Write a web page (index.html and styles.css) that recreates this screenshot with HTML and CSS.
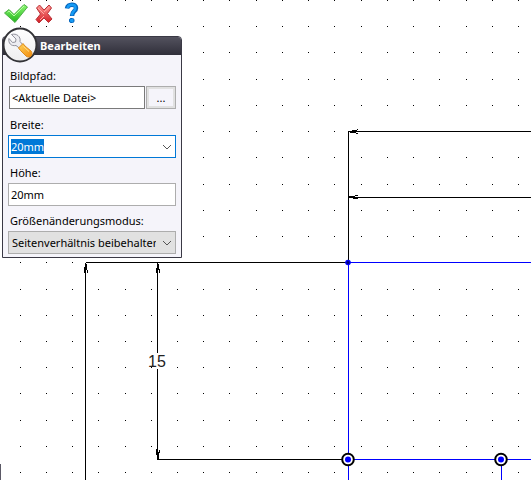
FILE: index.html
```html
<!DOCTYPE html>
<html lang="de">
<head>
<meta charset="utf-8">
<title>Bearbeiten</title>
<link rel="stylesheet" href="styles.css">
</head>
<body>
<main class="workspace">
  <svg class="drawing" aria-label="Skizze">
    <g id="grid" class="crisp"></g>
    <g class="crisp blue">
      <rect x="348" y="262" width="4000" height="1"/>
      <rect x="348" y="262" width="1" height="4000"/>
      <rect x="348" y="459" width="4000" height="1"/>
      <rect x="501" y="459" width="1" height="4000"/>
    </g>
    <g class="crisp">
      <rect x="348" y="131" width="4000" height="1"/>
      <rect x="348" y="197" width="4000" height="1"/>
      <rect x="348" y="131" width="1" height="131"/>
      <rect x="86" y="262" width="262" height="1"/>
      <rect x="85" y="263" width="1" height="4000"/>
      <rect x="157" y="262" width="1" height="91"/>
      <rect x="157" y="369" width="1" height="91"/>
      <rect x="157" y="459" width="191" height="1"/>
      <path d="M350 131h7v1h-1v1h-6zM352 130h5v1h-5zM357 129h1v1h-1zM356 133h2v1h-2z"/>
      <path d="M349 196h6v1h3v1h-9zM355 195h3v1h-3zM353 198h5v1h-5z"/>
      <path d="M85 264h2v6h-2zM84 267h2v6h-2zM87 270h1v3h-1z"/>
      <path d="M157 264h2v6h-2zM156 268h2v5h-2zM159 269h1v4h-1z"/>
      <path d="M157 452h2v8h-2zM156 449h2v6h-2zM159 450h1v3h-1z"/>
    </g>
    <rect class="edge crisp" x="0" y="464" width="1" height="4000"/>
    <circle class="blue" cx="348" cy="262.5" r="2.8"/>
    <circle class="core" cx="348" cy="262.5" r="1.5"/>
    <circle class="ring" cx="348" cy="459.5" r="5.8"/>
    <circle class="blue" cx="348" cy="459.5" r="3"/>
    <circle class="ring" cx="501" cy="459.5" r="5.8"/>
    <circle class="blue" cx="501" cy="459.5" r="3"/>
    <text class="dimension" x="157" y="367" text-anchor="middle">15</text>
  </svg>

  <nav class="toolbar">
    <button type="button" aria-label="Übernehmen">
      <svg width="24" height="24" viewBox="0 0 24 24">
        <defs><linearGradient id="g1" x2="0" y2="1"><stop stop-color="#8dfa72"/><stop offset="1" stop-color="#22b51c"/></linearGradient></defs>
        <path d="M0.500 13L5 9.500L10 14.500L20 4.500L23.500 7L11 22.500Z" fill="url(#g1)" stroke="#4fae48" stroke-linejoin="round"/>
        <path d="M3.500 12.300L5 11L10 16L20 6" fill="none" stroke="#b7ffa0"/>
      </svg>
    </button>
    <button type="button" aria-label="Abbrechen">
      <svg width="24" height="24" viewBox="0 0 24 24">
        <defs><linearGradient id="g2" x2="0" y2="1"><stop stop-color="#ff9590"/><stop offset="1" stop-color="#d31c24"/></linearGradient></defs>
        <path d="M4.500 8L7.500 5L12 10L17 5L19.500 8L15.500 13.500L20 19L16.500 22.500L12 18L7 23L4 19.500L8.500 14Z" fill="url(#g2)" stroke="#b83138" stroke-linejoin="round"/>
        <path d="M6 8L12 14M17.500 7L12 12M8 20L12 16" fill="none" stroke="#ffaaa6"/>
      </svg>
    </button>
    <button type="button" aria-label="Hilfe">
      <svg width="24" height="24" viewBox="0 0 24 24">
        <path d="M7 8.500C7.500 3.500 16 3.500 16 8C16 11.500 12 11 12 16" fill="none" stroke="#0565bd" stroke-width="4.500"/>
        <path d="M7.500 8C8.500 3.800 15.500 3.800 15.500 8C15.500 11 12 10.800 12 15.500" fill="none" stroke="#159bf5" stroke-width="2.500"/>
        <rect x="9.500" y="18.500" width="4.500" height="4" rx="1.500" fill="#159bf5" stroke="#0565bd"/>
      </svg>
    </button>
  </nav>

  <section class="panel">
    <svg class="badge" width="36" height="36" viewBox="0 0 36 36" aria-hidden="true">
      <defs>
        <linearGradient id="g3" x2="0" y2="1"><stop stop-color="#fff"/><stop offset="1" stop-color="#eeeeef"/></linearGradient>
        <linearGradient id="g4" x2="1" y2="1"><stop stop-color="#ffd257"/><stop offset="1" stop-color="#f28c0e"/></linearGradient>
      </defs>
      <circle cx="18" cy="18" r="16.500" fill="url(#g3)" stroke="#333337" stroke-width="2"/>
      <path d="M9.500 7.500L14 12L13.500 15L10.500 15.500L7 11.500C6 16 9 19.500 14 18.500L18.500 22L21.500 18.500L18 14.500C19 9.500 14.500 6 9.500 7.500Z" fill="#ededf1" stroke="#92929c" stroke-linejoin="round"/>
      <path d="M16.500 21L21 16.500L23 19L29 24C32 28 27.500 32 24 29L18.500 23.500Z" fill="url(#g4)" stroke="#dd8a1c" stroke-linejoin="round"/>
      <path d="M21.500 19.500L27 24.500" stroke="#ffe08a"/>
    </svg>
    <h1 class="title">Bearbeiten</h1>
    <form class="fields">
      <label for="path">Bildpfad:</label>
      <div class="path-row">
        <input id="path" class="path" type="text" value="&lt;Aktuelle Datei&gt;">
        <button class="browse" type="button" aria-label="Durchsuchen">...</button>
      </div>
      <label for="width">Breite:</label>
      <div class="combo">
        <input id="width" type="text" value="20mm">
        <svg class="chevron" width="10" height="6" viewBox="0 0 10 6"><path d="M1 1L5 5L9 1"/></svg>
      </div>
      <label for="height">Höhe:</label>
      <input id="height" class="plain" type="text" value="20mm">
      <label for="mode">Größenänderungsmodus:</label>
      <div class="choice">
        <select id="mode"><option>Seitenverhältnis beibehalten</option></select>
        <svg class="chevron" width="10" height="6" viewBox="0 0 10 6"><path d="M1 1L5 5L9 1"/></svg>
      </div>
    </form>
  </section>
</main>
<script src="script.js"></script>
</body>
</html>
```
FILE: styles.css
```css
* { box-sizing: border-box; }
body {
  margin: 0;
  background: #fff;
  color: #000;
  font: 11px/16px "Noto Sans", "Open Sans", sans-serif;
}
.workspace {
  position: relative;
  min-height: 100vh;
  overflow: hidden;
}
.drawing {
  position: absolute;
  inset: 0;
  width: 100%;
  height: 100%;
}
.crisp { shape-rendering: crispEdges; }
.blue { fill: #00f; }
.core { fill: #000078; }
.edge { fill: #5b5966; }
.ring { fill: #fff; stroke: #000; stroke-width: 2px; }
.dimension { font: 16px "Liberation Sans", sans-serif; fill: #222; }

.toolbar {
  position: relative;
  display: flex;
  gap: 4px;
  height: 36px;
  padding-left: 4px;
}
.toolbar button {
  width: 24px;
  height: 24px;
  padding: 0;
  border: 0;
  background: none;
}
.toolbar svg { display: block; }

.panel {
  position: relative;
  width: 180px;
  margin-left: 2px;
  border: 1px solid #3a3945;
  border-radius: 4px 4px 0 0;
  background: #f5f4fa;
}
.badge {
  position: absolute;
  left: -1px;
  top: -10px;
}
.title {
  margin: 0;
  padding-left: 37px;
  border-radius: 3px 3px 0 0;
  background: linear-gradient(#53525e, #302f3a);
  color: #fff;
  font-size: 11px;
  line-height: 18px;
}
.fields {
  display: flex;
  flex-direction: column;
  padding: 13px 5px 3px;
}
.fields label {
  padding-left: 2px;
  margin-bottom: 2px;
}
input, select, .browse {
  height: 23px;
  margin: 0;
  border-radius: 0;
  color: #000;
  font: inherit;
  outline: 0;
}
.path-row {
  display: flex;
  gap: 1px;
  margin-bottom: 8px;
  padding-left: 1px;
}
.path {
  flex: 1;
  min-width: 0;
  padding: 0 2px;
  border: 1px solid #7a7a7a;
  background: #fff;
}
.browse {
  width: 30px;
  padding: 0;
  border: 1px solid #adadad;
  background: #f5f4fa;
  box-shadow: inset 0 0 0 2px #e1e1e1;
}
.combo, .choice {
  display: grid;
  position: relative;
  margin-bottom: 7px;
}
.choice { margin-bottom: 0; }
.combo input {
  min-width: 0;
  padding: 0 20px 0 2px;
  border: 1px solid #0078d7;
  background: #fff;
  caret-color: transparent;
}
.combo input::selection { background: #0078d7; color: #fff; }
.plain {
  margin-bottom: 7px;
  padding: 0 2px;
  border: 1px solid #adadad;
  background: #fff;
}
.choice select {
  min-width: 0;
  padding: 0 19px 0 3px;
  border: 1px solid #adadad;
  background: #e1e1e1;
  appearance: none;
  overflow: hidden;
  text-overflow: clip;
}
.chevron {
  position: absolute;
  right: 4px;
  top: 9px;
  fill: none;
  stroke: #555;
  pointer-events: none;
}
```
FILE: script.js
```js
// Grid points every 26.23 units, snapped to whole pixels
const pitch = 26.23;
const grid = document.getElementById("grid");
const box = grid.ownerSVGElement.getBoundingClientRect();
let points = "";
for (let y = 0.5; y < box.height; y += pitch) {
  for (let x = 20.1; x < box.width; x += pitch) {
    points += `M${Math.floor(x)} ${Math.floor(y)}h1v1h-1z`;
  }
}
const path = document.createElementNS("http://www.w3.org/2000/svg", "path");
path.setAttribute("d", points);
grid.append(path);

const width = document.getElementById("width");
width.focus();
width.select();
```
